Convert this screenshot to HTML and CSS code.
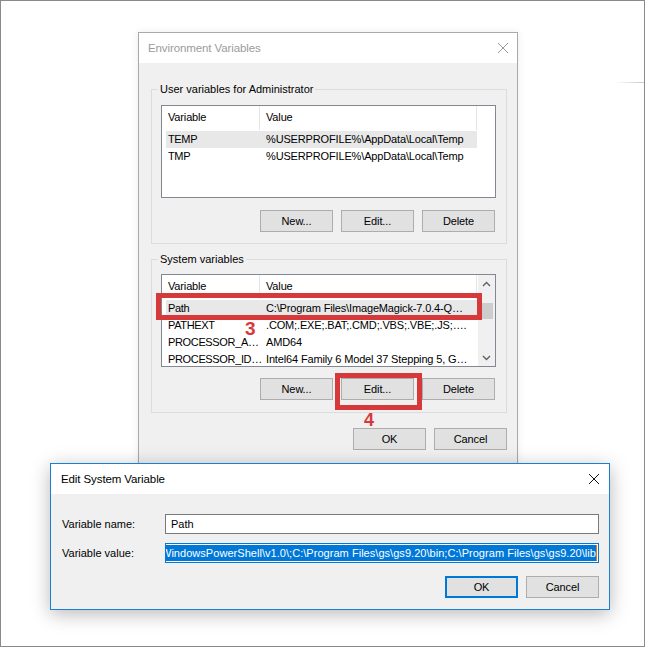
FILE: index.html
```html
<!DOCTYPE html>
<html>
<head>
<meta charset="utf-8">
<title>Environment Variables</title>
<link rel="stylesheet" href="styles.css">
</head>
<body>
<div class="desktop">
  <div class="stray-line"></div>

  <section class="window env-window">
    <header class="titlebar inactive">
      <span class="title">Environment Variables</span>
      <svg class="close" width="12" height="12" viewBox="0 0 12 12"><path d="M1 1 L11 11 M11 1 L1 11" stroke="#9a9a9a" stroke-width="1" fill="none"/></svg>
    </header>
    <div class="env-body">
      <div class="group user-group">
        <div class="group-title">User variables for Administrator</div>
        <div class="listview lv-user">
          <div class="lv-main">
            <div class="lv-row lv-head"><div class="c1">Variable</div><div class="c2">Value</div></div>
            <div class="lv-row sel"><div class="c1">TEMP</div><div class="c2">%USERPROFILE%\AppData\Local\Temp</div></div>
            <div class="lv-row"><div class="c1">TMP</div><div class="c2">%USERPROFILE%\AppData\Local\Temp</div></div>
          </div>
        </div>
        <div class="btn-row">
          <button class="btn">New...</button>
          <button class="btn">Edit...</button>
          <button class="btn">Delete</button>
        </div>
      </div>

      <div class="group sys-group">
        <div class="group-title">System variables</div>
        <div class="listview lv-sys">
          <div class="lv-main">
            <div class="lv-row lv-head"><div class="c1">Variable</div><div class="c2">Value</div></div>
            <div class="lv-row sel"><div class="c1">Path</div><div class="c2">C:\Program Files\ImageMagick-7.0.4-Q…</div></div>
            <div class="lv-row"><div class="c1">PATHEXT</div><div class="c2">.COM;.EXE;.BAT;.CMD;.VBS;.VBE;.JS;….</div></div>
            <div class="lv-row"><div class="c1">PROCESSOR_A…</div><div class="c2">AMD64</div></div>
            <div class="lv-row"><div class="c1">PROCESSOR_ID…</div><div class="c2">Intel64 Family 6 Model 37 Stepping 5, G…</div></div>
          </div>
          <div class="scrollbar">
            <svg class="arrow" width="17" height="17" viewBox="0 0 17 17"><path d="M5 10 L8.5 6.5 L12 10" stroke="#606060" stroke-width="1.4" fill="none"/></svg>
            <div class="thumb"></div>
            <div class="track-fill"></div>
            <svg class="arrow" width="17" height="17" viewBox="0 0 17 17"><path d="M5 7 L8.5 10.5 L12 7" stroke="#606060" stroke-width="1.4" fill="none"/></svg>
          </div>
        </div>
        <div class="btn-row">
          <button class="btn">New...</button>
          <button class="btn">Edit...</button>
          <button class="btn">Delete</button>
        </div>
      </div>

      <div class="btn-row dialog-btns">
        <button class="btn">OK</button>
        <button class="btn">Cancel</button>
      </div>
    </div>
  </section>

  <div class="callout callout-path"></div>
  <div class="callout callout-edit"></div>
  <span class="step step-3">3</span>
  <span class="step step-4">4</span>

  <section class="window edit-window">
    <header class="titlebar">
      <span class="title">Edit System Variable</span>
      <svg class="close" width="12" height="12" viewBox="0 0 12 12"><path d="M1 1 L11 11 M11 1 L1 11" stroke="#111" stroke-width="1" fill="none"/></svg>
    </header>
    <div class="edit-body">
      <div class="field-grid">
        <label class="field-label">Variable name:</label>
        <div class="textbox"><span class="tb-text">Path</span></div>
        <label class="field-label">Variable value:</label>
        <div class="textbox focused"><span class="tb-text selected">WindowsPowerShell\v1.0\;C:\Program Files\gs\gs9.20\bin;C:\Program Files\gs\gs9.20\lib</span><span class="caret"></span></div>
      </div>
      <div class="btn-row edit-btns">
        <button class="btn default">OK</button>
        <button class="btn">Cancel</button>
      </div>
    </div>
  </section>
</div>
</body>
</html>
```

FILE: styles.css
```css
* { box-sizing: border-box; }
html, body { margin: 0; padding: 0; background: #fff; }
body {
  font-family: "Liberation Sans", Arial, sans-serif;
  font-size: 11px;
  color: #000;
}
.desktop {
  position: relative;
  width: 645px;
  height: 647px;
  border: 1px solid #8a8a8a;
  overflow: hidden;
  background: #fff;
}
.stray-line {
  position: absolute;
  left: 614px;
  top: 81px;
  width: 29px;
  height: 1px;
  background: linear-gradient(to right, rgba(200,200,200,0), #c8c8c8);
}

/* windows */
.window {
  position: absolute;
  background: #f0f0f0;
  display: flex;
  flex-direction: column;
}
.env-window {
  left: 137px;
  top: 31px;
  width: 380px;
  height: 432px;
  border: 1px solid #a9a9a9;
  box-shadow: 0 0 8px rgba(0,0,0,0.08);
}
.edit-window {
  left: 49px;
  top: 462px;
  width: 560px;
  height: 147px;
  border: 1px solid #1a7fd4;
  box-shadow: 0 4px 18px rgba(0,0,0,0.28);
}
.titlebar {
  height: 30px;
  flex: none;
  background: #fff;
  display: flex;
  align-items: center;
  justify-content: space-between;
  padding: 0 9px 0 9px;
}
.titlebar .title {
  font-size: 11.5px;
  letter-spacing: -0.1px;
}
.titlebar.inactive .title { color: #9b9b9b; }
.close { display: block; }
.env-window .titlebar { padding-right: 8px; }
.edit-window .titlebar { padding-left: 10px; padding-right: 9px; }

/* env body */
.env-body {
  flex: 1;
  padding: 26px 10px 0 12px;
}
.group {
  border: 1px solid #dcdcdc;
  padding: 0 10px 0 9px;
}
.group-title {
  display: table;
  margin: -8px 0 0 -3px;
  padding: 0 2px;
  height: 14px;
  line-height: 14px;
  background: #f0f0f0;
}
.user-group { padding-bottom: 11px; }
.sys-group { margin-top: 15px; padding-bottom: 12px; }

.listview {
  background: #fff;
  border: 1px solid #828790;
  height: 93px;
  display: flex;
  overflow: hidden;
}
.lv-user { margin-top: 9px; }
.lv-sys { margin-top: 8px; }
.lv-main {
  flex: 1;
  padding-left: 4px;
}
.lv-row {
  display: flex;
  height: 17px;
  line-height: 17px;
  white-space: nowrap;
  width: 311px;
  letter-spacing: -0.15px;
}
.lv-row.sel { background: #e8e8e8; }
.lv-head {
  height: 24px;
  line-height: 23px;
  margin-bottom: 0.5px;
}
.c1 { width: 94px; padding-left: 2px; overflow: visible; letter-spacing: -0.35px; flex: none; }
.c2 { flex: 1; padding-left: 6px; overflow: hidden; }
.lv-head .c1 { border-right: 1px solid #e5e5e5; letter-spacing: -0.15px; }
.lv-head .c2 { border-right: 1px solid #e5e5e5; padding-left: 6px; }

.scrollbar {
  width: 17px;
  flex: none;
  background: #f0f0f0;
  display: flex;
  flex-direction: column;
  align-items: center;
}
.scrollbar .arrow { display: block; flex: none; }
.scrollbar .arrow:first-child { margin-top: 1px; }
.thumb {
  width: 13px;
  height: 16px;
  margin-top: 10px;
  background: #cdcdcd;
  flex: none;
}
.track-fill { flex: 1; }

.btn-row {
  display: flex;
  justify-content: flex-end;
  gap: 8px;
  margin-top: 12px;
  padding-right: 1px;
}
.sys-group .btn-row { margin-top: 11px; }
.btn {
  font: inherit;
  color: #000;
  width: 73px;
  height: 22px;
  padding: 0;
  margin: 0;
  background: #e1e1e1;
  border: 1px solid #adadad;
  border-radius: 0;
  letter-spacing: -0.1px;
}
.btn.default { border: 2px solid #0078d7; }
.dialog-btns { margin-top: 15px; padding-right: 0; }

/* callouts */
.callout {
  position: absolute;
  border: 5px solid #d7393b;
}
.callout-path { left: 155px; top: 292px; width: 326px; height: 27px; }
.callout-edit { left: 334px; top: 372px; width: 87px; height: 37px; }
.step {
  position: absolute;
  color: #d7393b;
  font-weight: bold;
  font-size: 19px;
  line-height: 20px;
}
.step-3 { left: 244px; top: 318px; }
.step-4 { left: 363px; top: 409px; font-size: 18px; }

/* edit dialog body */
.edit-body {
  flex: 1;
  padding: 20px 10px 0 10px;
}
.field-grid {
  display: grid;
  grid-template-columns: 104px 1fr;
  row-gap: 9px;
  align-items: center;
}
.field-label { padding-left: 1px; }
.textbox {
  height: 20px;
  background: #fff;
  border: 1px solid #7a7a7a;
  display: flex;
  align-items: center;
  overflow: hidden;
  white-space: nowrap;
  padding: 0 5px;
}
.textbox.focused {
  border-color: #0078d7;
  justify-content: flex-end;
  padding: 0 1px 0 0;
}
.tb-text { flex: none; }
.tb-text.selected {
  background: #0078d7;
  color: #fff;
  height: 16px;
  line-height: 16px;
  letter-spacing: 0.04px;
}
.caret {
  flex: none;
  width: 1px;
  height: 16px;
  background: #e07a20;
}
.edit-btns { margin-top: 13px; padding-right: 0; }
```
